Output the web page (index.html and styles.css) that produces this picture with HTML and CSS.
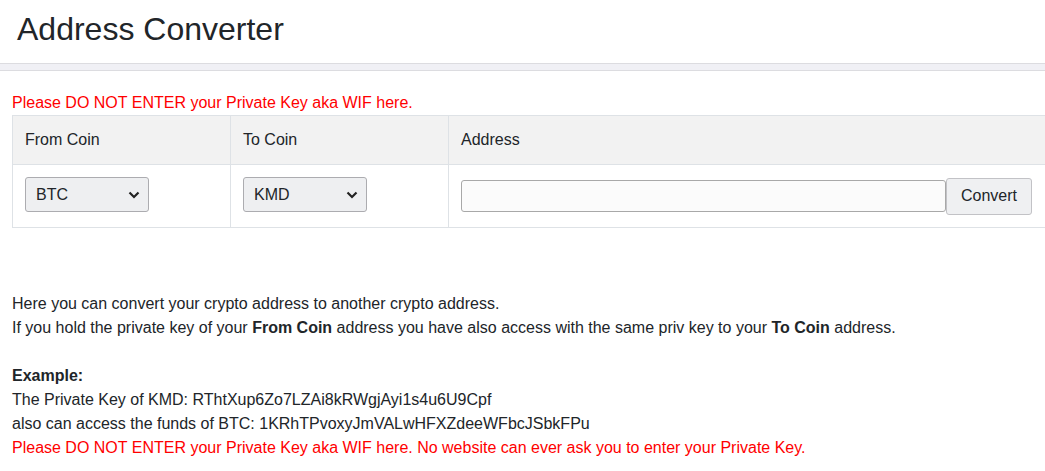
FILE: index.html
```html
<!DOCTYPE html>
<html>
<head>
<meta charset="utf-8">
<link rel="stylesheet" href="styles.css">
</head>
<body>
<header class="page-header">
  <h1 class="title">Address Converter</h1>
</header>
<div class="band"></div>
<main class="content">
  <p class="warning">Please DO NOT ENTER your Private Key aka WIF here.</p>
  <div class="table-wrap">
    <table class="conv-table">
      <thead>
        <tr>
          <th class="col-coin">From Coin</th>
          <th class="col-coin">To Coin</th>
          <th>Address</th>
        </tr>
      </thead>
      <tbody>
        <tr>
          <td>
            <div class="select-wrap">
              <select class="coin-select"><option>BTC</option><option>KMD</option></select>
              <svg class="chev" width="12" height="8" viewBox="0 0 12 8"><path d="M1.5 1.5 L6 6 L10.5 1.5" fill="none" stroke="#222" stroke-width="2.2"/></svg>
            </div>
          </td>
          <td>
            <div class="select-wrap">
              <select class="coin-select"><option>KMD</option><option>BTC</option></select>
              <svg class="chev" width="12" height="8" viewBox="0 0 12 8"><path d="M1.5 1.5 L6 6 L10.5 1.5" fill="none" stroke="#222" stroke-width="2.2"/></svg>
            </div>
          </td>
          <td>
            <div class="addr-row">
              <input class="addr-input" type="text">
              <button class="convert-btn">Convert</button>
            </div>
          </td>
        </tr>
      </tbody>
    </table>
  </div>
  <div class="info">
    Here you can convert your crypto address to another crypto address.<br>
    If you hold the private key of your <b>From Coin</b> address you have also access with the same priv key to your <b>To Coin</b> address.<br>
    <br>
    <b>Example:</b><br>
    The Private Key of KMD: RThtXup6Zo7LZAi8kRWgjAyi1s4u6U9Cpf<br>
    also can access the funds of BTC: 1KRhTPvoxyJmVALwHFXZdeeWFbcJSbkFPu<br>
    <span class="red">Please DO NOT ENTER your Private Key aka WIF here. No website can ever ask you to enter your Private Key.</span>
  </div>
</main>
</body>
</html>
```

FILE: styles.css
```css
html, body {
  margin: 0;
  padding: 0;
  overflow: hidden;
}
body {
  font-family: "Liberation Sans", Arial, sans-serif;
  font-size: 16px;
  line-height: 24px;
  color: #212529;
  background: #fff;
}
.page-header {
  height: 63px;
  border-bottom: 1px solid #dcdce0;
  box-sizing: content-box;
}
.title {
  margin: 0;
  padding: 10px 0 0 17px;
  font-size: 32px;
  line-height: 38px;
  font-weight: 400;
  color: #212529;
}
.band {
  height: 6px;
  background: #f0f0f5;
  border-bottom: 1px solid #dcdce0;
}
.content {
  padding: 20px 0 0 12px;
}
.warning {
  margin: 0;
  color: #ff0000;
}
.red {
  color: #ff0000;
}
.table-wrap {
  overflow: hidden;
}
.conv-table {
  width: 1040px;
  border-collapse: collapse;
}
.conv-table th,
.conv-table td {
  border: 1px solid #dee2e6;
  padding: 12px;
  text-align: left;
  vertical-align: top;
}
.conv-table th {
  background: #f2f2f2;
  font-weight: 400;
}
.col-coin {
  width: 193px;
}
.select-wrap {
  position: relative;
  width: 124px;
  height: 35px;
}
.coin-select {
  appearance: none;
  -webkit-appearance: none;
  width: 124px;
  height: 35px;
  padding: 0 0 0 10px;
  font-family: "Liberation Sans", Arial, sans-serif;
  font-size: 16px;
  color: #212529;
  background: #eeeff1;
  border: 1px solid #acacb0;
  border-radius: 3px;
  display: block;
}
.chev {
  position: absolute;
  right: 9px;
  top: 14px;
  pointer-events: none;
}
.addr-row {
  display: flex;
  align-items: center;
  height: 38px;
}
.addr-input {
  width: 485px;
  height: 32px;
  box-sizing: border-box;
  border: 1px solid #a8a8a8;
  border-radius: 3px;
  background: #fbfbfb;
  margin: 0;
}
.convert-btn {
  width: 86px;
  height: 37px;
  margin: 0;
  font-family: "Liberation Sans", Arial, sans-serif;
  font-size: 16px;
  color: #212529;
  background: #eff0f2;
  border: 1px solid #c2c2c6;
  border-radius: 3px;
}
.info {
  margin-top: 64px;
}
.info b {
  font-weight: 700;
}
```
